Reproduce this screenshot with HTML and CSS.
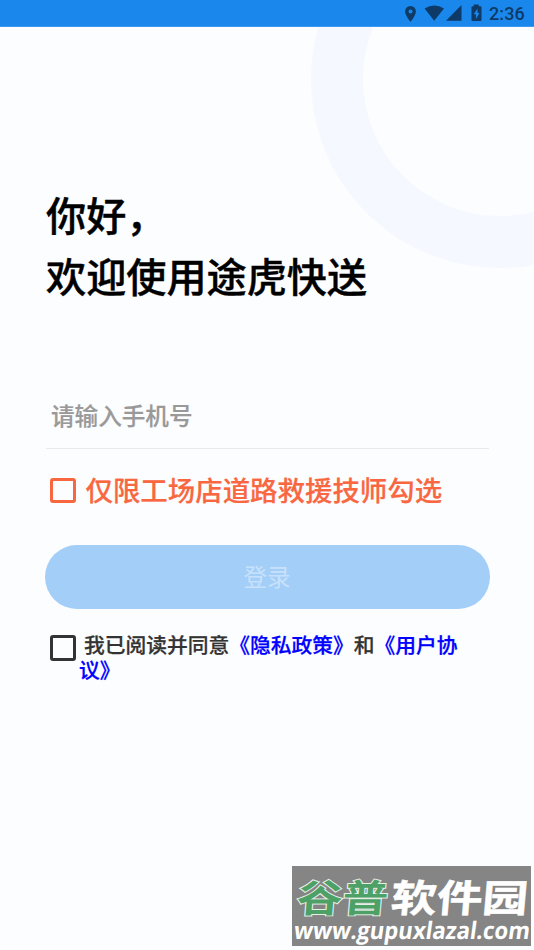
FILE: index.html
```html
<!DOCTYPE html>
<html lang="zh-CN">
<head>
<meta charset="utf-8">
<title>登录</title>
<link rel="stylesheet" href="styles.css">
</head>
<body>
<header class="status">
  <svg class="status-icons" width="96" height="26" viewBox="0 0 96 26" fill="currentColor">
    <path fill-rule="evenodd" d="M15.500 6a5.400 5.400 0 0 0-5.400 5.400c0 4 5.400 10.400 5.400 10.400s5.400-6.400 5.400-10.400A5.400 5.400 0 0 0 15.500 6zm0 3.500a2 2 0 1 1 0 4 2 2 0 0 1 0-4z"/>
    <path d="M39.200 20.800 29.600 8.600Q39.200 2.200 49 8.600z"/>
    <path d="M66.500 5v15.800H51z"/>
    <path fill-rule="evenodd" d="M78.800 4.500h5v1.700H85.500q1 0 1 1v12.800q0 1-1 1h-8q-1 0-1-1V7.200q0-1 1-1h1.300zM82.500 8.500l-3.800 5.800h2.200V19l3.600-6h-2z"/>
  </svg>
  <span class="clock">2:36</span>
</header>
<main class="page">
  <div class="ring"></div>
  <h1 class="title">你好，<br>欢迎使用途虎快送</h1>
  <div class="phone">请输入手机号</div>
  <label class="rescue"><span class="box"></span><span>仅限工场店道路救援技师勾选</span></label>
  <button class="login">登录</button>
  <div class="terms">
    <span class="box"></span>
    <p class="terms-text"><span class="lead">我已阅读并同意</span><a>《隐私政策》</a>和<a>《用户协<br>议》</a></p>
  </div>
</main>
<aside class="mark">
  <svg width="239" height="80" viewBox="0 0 239 80">
    <g class="mark-name">
      <text class="green" transform="translate(4 46) skewX(-5)" textLength="91" lengthAdjust="spacingAndGlyphs">谷普</text>
      <text class="white" transform="translate(98 46) skewX(-5)" textLength="137" lengthAdjust="spacingAndGlyphs">软件园</text>
    </g>
    <text class="url" transform="translate(1 73) skewX(-8)" textLength="236" lengthAdjust="spacingAndGlyphs">www.gupuxlazal.com</text>
  </svg>
</aside>
</body>
</html>
```
FILE: styles.css
```css
* { box-sizing: border-box; }
body {
  margin: 0;
  height: 950px;
  position: relative;
  overflow: hidden;
  background: #fcfdff;
  font-family: "Noto Sans CJK SC", sans-serif;
}
.status {
  height: 27px;
  background: #1a87ed;
  border-bottom: 1px solid #3c98f0;
  color: #0d3a66;
  display: flex;
  padding-left: 395px;
}
.clock {
  font: 500 18px/27px Roboto, sans-serif;
  letter-spacing: .1px;
  margin-left: -2px;
}
.page {
  position: relative;
  height: 923px;
  overflow: hidden;
  padding: 156px 45px 0 44px;
}
.ring {
  position: absolute;
  left: 311px;
  top: -137px;
  width: 378px;
  height: 378px;
  border: 52px solid #f5f8ff;
  border-radius: 50%;
}
.title {
  position: relative;
  margin: 0 0 0 2px;
  font-size: 40.150px;
  line-height: 61px;
  font-weight: 500;
  color: #000;
  -webkit-text-stroke: .4px #000;
}
.phone {
  margin: 78px 0 0 2px;
  height: 66px;
  padding-left: 5px;
  border-bottom: 1px solid #e9eaec;
  color: #999;
  font-size: 23.600px;
  line-height: 64px;
  font-weight: 500;
  -webkit-text-stroke: .2px #999;
}
.rescue {
  display: flex;
  align-items: center;
  height: 42px;
  margin: 20px 0 0 6px;
  gap: 10px;
  color: #f96741;
  font-size: 27.450px;
  line-height: 40px;
  font-weight: 500;
  white-space: nowrap;
  -webkit-text-stroke: .2px #f96741;
}
.rescue .box { margin-top: 1px; }
.rescue span:last-child { margin-top: -2px; }
.box {
  flex: none;
  width: 25.500px;
  height: 25.500px;
  border: 3px solid currentColor;
  border-radius: 3px;
}
.login {
  display: block;
  width: 445px;
  height: 64px;
  margin: 34px 0 0 .5px;
  padding: 0 0 2px;
  border: 0;
  border-radius: 32px;
  background: #a3cef8;
  color: #c8e1fb;
  font: 400 23.500px/62px "Noto Sans CJK SC", sans-serif;
}
.terms {
  display: flex;
  margin: 23px 0 0 6px;
  color: #333;
}
.terms .box { margin-top: 3px; }
.terms-text {
  margin: 0 0 0 3.500px;
  font-size: 20.750px;
  line-height: 24.500px;
  font-weight: 500;
  white-space: nowrap;
  -webkit-text-stroke: .25px;
}
.lead { padding-left: 5px; }
.terms a { color: #00f; }
.mark {
  position: absolute;
  left: 292px;
  top: 866px;
  width: 239px;
  height: 80px;
  background: #858585;
}
.mark svg { display: block; }
.mark-name { font-size: 38px; font-weight: 700; }
.green { fill: #4ea166; stroke: #e4efe6; stroke-width: 2px; paint-order: stroke; }
.white { fill: #fff; stroke: #fff; stroke-width: .5px; }
.url { fill: #fff; font: 700 24px "Open Sans", sans-serif; }
```
